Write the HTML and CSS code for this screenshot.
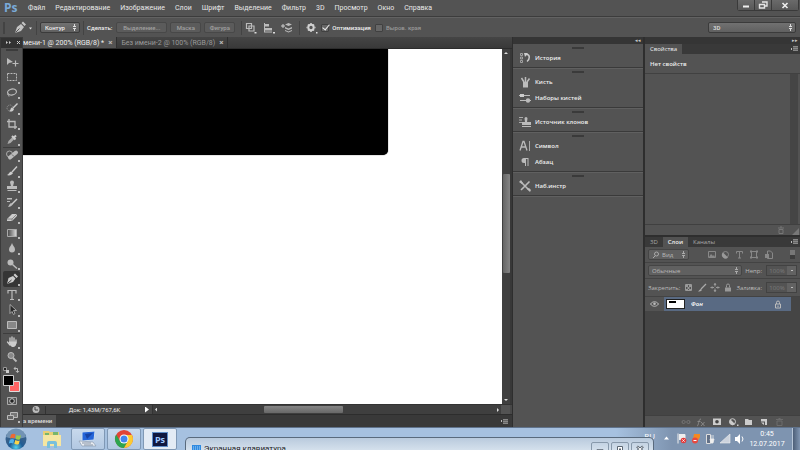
FILE: index.html
```html
<!DOCTYPE html>
<html lang="ru">
<head>
<meta charset="utf-8">
<title>Ps</title>
<link rel="stylesheet" href="styles.css">
</head>
<body>
<header class="menubar">
  <span class="logo">Ps</span>
  <nav class="menu">
    <a href="#">Файл</a><a href="#">Редактирование</a><a href="#">Изображение</a><a href="#">Слои</a><a href="#">Шрифт</a><a href="#">Выделение</a><a href="#">Фильтр</a><a href="#">3D</a><a href="#">Просмотр</a><a href="#">Окно</a><a href="#">Справка</a>
  </nav>
  <div class="winbtns">
    <button aria-label="Свернуть"><svg width="16" height="10"><path d="M5 6.500h6" stroke="#eee" stroke-width="2"/></svg></button>
    <button aria-label="Восстановить"><svg width="16" height="10"><path d="M7 2h5v4h-2M4.500 4.500h5v3.500h-5z" fill="none" stroke="#e4e4e4" stroke-width="1.400"/></svg></button>
    <button class="close" aria-label="Закрыть"><svg width="16" height="10"><path d="M5.500 3l5 5M10.500 3l-5 5" stroke="#eee" stroke-width="1.600"/></svg></button>
  </div>
</header>

<section class="options">
  <i class="grip-v"></i>
  <svg class="pen" width="18" height="14" viewBox="0 0 18 14"><path d="M1 12l2-6 4-3 3 3-3 4zM7.500 2l1.500-1.500 3 3L10.500 5z" fill="#c4c4c4"/><path d="M1.500 11.500l4-4" stroke="#555"/><path d="M15 6.500h3l-1.500 2z" fill="#ddd"/></svg>
  <i class="rule"></i>
  <select class="mode" aria-label="Режим"><option>Контур</option></select>
  <i class="rule"></i>
  <span class="make">Сделать:</span>
  <button class="wide">Выделение...</button>
  <button>Маска</button>
  <button>Фигура</button>
  <i class="rule"></i>
  <div class="opticons">
    <svg width="12" height="12" viewBox="0 0 12 12"><path d="M1.500 1.500h5v5h-5zM4 4h5v5H4z" fill="none" stroke="#bbb" stroke-width="1.200"/><path d="M9.500 10h2v1.500h-2z" fill="#ddd"/></svg>
    <svg width="12" height="12" viewBox="0 0 12 12"><path d="M1.500 1v9M1 10h8" stroke="#bbb"/><path d="M2 2h4v2.500H2zM2 6h7v2.500H2z" fill="#bbb"/><path d="M10 10h2v1.500h-2z" fill="#ddd"/></svg>
    <svg width="12" height="12" viewBox="0 0 12 12"><path d="M0 4h4M2 2v4" stroke="#ccc"/><path d="M4 2.500L7.500 1 11 2.500 7.500 4zM4 5l3.500 1.500L11 5v1.500L7.500 8 4 6.500zM4 8l3.500 1.500L11 8v1L7.500 10.500 4 9z" fill="#bbb"/></svg>
  </div>
  <i class="rule"></i>
  <svg class="gear" width="12" height="12" viewBox="0 0 12 12"><circle cx="5" cy="5.500" r="2.700" fill="none" stroke="#d0d0d0" stroke-width="2"/><path d="M5 1v1M5 9v1M.5 5.500h1M8.500 5.500h1M2 2.500l1 1M8 2.500l-1 1M2 8.500l1-1M8 8.500l-1-1" stroke="#d0d0d0" stroke-width="1.500"/><path d="M10 10h1.500v1.500H10z" fill="#ddd"/></svg>
  <label class="check"><input type="checkbox" checked>Оптимизация</label>
  <label class="check off"><input type="checkbox" disabled>Выров. края</label>
  <select class="space" aria-label="Рабочая среда"><option>3D</option></select>
</section>

<main class="work">
  <aside class="tools">
    <div class="toolhead"><svg width="22" height="9"><path d="M5 3l2 1.500L5 6zM8 3l2 1.500L8 6z" fill="#ccc"/><path d="M16 3l3 3M19 3l-3 3" stroke="#ccc"/></svg></div>
    <i class="grip"></i>
    <div class="set set6">
      <button class="plain" aria-label="Перемещение"><svg viewBox="0 0 16 14"><path d="M3 3v7l2-2 4-1z" fill="#bbb"/><path d="M8.500 8.500h6M11.500 5.500v6" stroke="#bbb" stroke-width="1.200"/></svg></button>
      <button aria-label="Область"><svg viewBox="0 0 16 14"><path d="M3.500 3.500h9v7h-9z" fill="none" stroke="#bbb" stroke-dasharray="2 1"/></svg></button>
      <button aria-label="Лассо"><svg viewBox="0 0 16 14"><ellipse cx="8" cy="6" rx="4.500" ry="3" transform="rotate(-12 8 6)" fill="none" stroke="#bbb" stroke-width="1.200"/><path d="M4 7.500c-1 2 1 1 1 3" fill="none" stroke="#bbb"/></svg></button>
      <button aria-label="Быстрое выделение"><svg viewBox="0 0 16 14"><circle cx="6" cy="7" r="3" fill="none" stroke="#999" stroke-dasharray="1 1"/><path d="M13.500 2.500L9 7" stroke="#ccc" stroke-width="1.500"/><path d="M5 10c2 0 1-3 3-3.500L10 8c-1 3-3 3-5 2z" fill="#ccc"/></svg></button>
      <button aria-label="Рамка"><svg viewBox="0 0 16 14"><path d="M5 2v8h8M3 4.500h8V12" fill="none" stroke="#bbb" stroke-width="1.300"/></svg></button>
      <button aria-label="Пипетка"><svg viewBox="0 0 16 14"><path d="M3.500 12l1-3 4-4 2 2-4 4z" fill="#aaa"/><path d="M8 4l3.500 3.500M10 5.500L12 3.500" stroke="#ccc" stroke-width="2"/></svg></button>
    </div>
    <div class="set set12">
      <button aria-label="Восстанавливающая кисть"><svg viewBox="0 0 16 14"><circle cx="5.500" cy="6" r="3" fill="none" stroke="#aaa"/><path d="M6 9.500L12 4.500" stroke="#bbb" stroke-width="4" stroke-linecap="round"/><path d="M8 6.500l2 2" stroke="#666"/></svg></button>
      <button aria-label="Кисть"><svg viewBox="0 0 16 14"><path d="M13 2.500L8 8" stroke="#ccc" stroke-width="1.400"/><path d="M3 11c2-.5 2-3 4-3.500L9 9c-1 2-4 3-6 2z" fill="#ccc"/></svg></button>
      <button aria-label="Штамп"><svg viewBox="0 0 16 14"><path d="M6 3.500a2 2 0 014 0L9 7h4v3H3V7h4zM3.500 11h9v1h-9z" fill="#bbb"/></svg></button>
      <button aria-label="Архивная кисть"><svg viewBox="0 0 16 14"><path d="M13 4L8 9" stroke="#ccc" stroke-width="1.400"/><path d="M4 12c1-1 1-3 3-4l2 1c-1 2-3 3-5 3zM3 3h5v1.500H3zM3 6h3v1H3z" fill="#bbb"/></svg></button>
      <button aria-label="Ластик"><svg viewBox="0 0 16 14"><path d="M3 9l5-5h5v2l-5 5H3z" fill="#ccc"/><path d="M3 9h5l5-5M8 9v2" fill="none" stroke="#777" stroke-width=".8"/></svg></button>
      <button aria-label="Градиент"><svg viewBox="0 0 16 14"><defs><linearGradient id="gr"><stop stop-color="#444"/><stop offset="1" stop-color="#ddd"/></linearGradient></defs><path d="M3.500 3.500h9v7h-9z" fill="url(#gr)" stroke="#aaa"/></svg></button>
      <button aria-label="Размытие"><svg viewBox="0 0 16 14"><path d="M8 2c1 3 3 4 3 6.500a3 3 0 01-6 0C5 6 7 5 8 2z" fill="#bbb"/></svg></button>
      <button aria-label="Осветлитель"><svg viewBox="0 0 16 14"><circle cx="6.500" cy="5.500" r="3" fill="#bbb"/><path d="M8.500 7.500L13 11.500" stroke="#bbb" stroke-width="1.500"/></svg></button>
      <button class="on" aria-label="Перо"><svg viewBox="0 0 16 14"><path d="M3 12l1.500-6L9 4l2.500 2.500L9 10zM9.500 3L11 1.500 14 4.500 12.500 6z" fill="#ccc"/><path d="M3.500 11.500L7.500 8" stroke="#333"/></svg></button>
      <button aria-label="Текст"><svg viewBox="0 0 16 14"><path d="M4 5.500v-3h8v3M8 3v8.500M6 11.500h4" fill="none" stroke="#bbb" stroke-width="1.200"/></svg></button>
      <button aria-label="Выделение контура"><svg viewBox="0 0 16 14"><path d="M6 1.500v9l2-2 1.500 3 1.500-1-1.500-3h3z" fill="#292929" stroke="#bbb" stroke-width=".8"/></svg></button>
      <button aria-label="Прямоугольник"><svg viewBox="0 0 16 14"><path d="M3.500 3.500h9v7h-9z" fill="#888" stroke="#bbb"/></svg></button>
    </div>
    <div class="set set2">
      <button aria-label="Рука"><svg viewBox="0 0 16 14"><path d="M6 7V3M8 7V2M10 7V3M12 8V5M3.500 7L6 10" stroke="#ccc" stroke-width="1.300" stroke-linecap="round"/><path d="M5 6.500h7.500c0 3-1 5.500-3 5.500-3 0-3-2-4.500-4z" fill="#ccc"/></svg></button>
      <button class="plain" aria-label="Масштаб"><svg viewBox="0 0 16 14"><circle cx="7" cy="5.500" r="3" fill="#888" stroke="#bbb"/><path d="M9 8l3.500 3.500" stroke="#bbb" stroke-width="1.800"/></svg></button>
    </div>
    <svg class="swatch" width="21" height="28"><path d="M2.500 2.500h3v3h-3z" fill="#222" stroke="#999"/><path d="M5 5h3v3H5z" fill="#ccc"/><path d="M14 3.500h2.500v3" fill="none" stroke="#bbb"/><path d="M14.500 1.500v4l-2-2zM14.500 6h4l-2 2z" fill="#bbb"/><path d="M8.500 16.500h10v10h-10z" fill="#ff6464" stroke="#ddd"/><path d="M2.500 10.500h10v10h-10z" fill="#000" stroke="#ccc"/></svg>
    <div class="set set2b">
      <button class="plain" aria-label="Быстрая маска"><svg viewBox="0 0 16 14"><path d="M3.500 3.500h9v7h-9z" fill="none" stroke="#aaa"/><circle cx="8" cy="7" r="2.300" fill="#222" stroke="#ccc"/></svg></button>
      <button aria-label="Режим экрана"><svg viewBox="0 0 16 14"><path d="M6.500 3.500h7v5h-7z" fill="#777" stroke="#bbb"/><path d="M3.500 6.500h6v4h-6z" fill="#666" stroke="#bbb"/></svg></button>
    </div>
  </aside>

  <section class="doc">
    <div class="tabs">
      <div class="tab cur"><span>мени-1 @ 200% (RGB/8) *</span><b>×</b></div>
      <div class="tab"><span>Без имени-2 @ 100% (RGB/8)</span><b>×</b></div>
    </div>
    <div class="view">
      <div class="canvas"><div class="shape"></div></div>
      <div class="vbar"><i class="up"></i><i class="vthumb"></i><i class="down"></i></div>
    </div>
    <div class="status">
      <svg width="22" height="9"><circle cx="13" cy="4.500" r="3.500" fill="#bbb"/><path d="M12 2v3h3" fill="none" stroke="#444"/></svg>
      <span class="size">Док: 1,43M/767,6K</span>
      <i class="play"></i>
      <div class="hbar"><i class="left"></i><i class="hthumb"></i><i class="right"></i></div>
      <i class="corner"></i>
    </div>
    <div class="timeline"><span>а времени</span><i class="pmenu"></i></div>
  </section>

  <aside class="dock">
    <div class="colhead">◂◂</div>
    <div class="group">
      <button><svg viewBox="0 0 12 12"><path d="M1.500 1.500h2v2h-2zM1.500 5h2v2h-2zM1.500 8.500h2v2h-2z" fill="none" stroke="#aaa" stroke-width=".9"/><path d="M6 2.500h2c3 0 3 5 0 7" fill="none" stroke="#ccc" stroke-width="1.500"/><path d="M5 1h4L6 5z" fill="#ccc"/></svg>История</button>
    </div>
    <div class="group">
      <button><svg viewBox="0 0 12 12"><path d="M4 6h5v5.500H4z" fill="#bbb"/><path d="M5 6L2.500 2M6.500 6V1M8 6l2.500-3.500" stroke="#bbb" stroke-width="1.500"/></svg>Кисть</button>
      <button><svg viewBox="0 0 12 12"><path d="M0 3.500h11M1 8.500h11" stroke="#bbb" stroke-width="1.200"/><path d="M1 2h4v3H1z" fill="#ccc"/><circle cx="9" cy="8.500" r="2.200" fill="#bbb"/></svg>Наборы кистей</button>
    </div>
    <div class="group">
      <button><svg viewBox="0 0 12 12"><path d="M0 1.500h4M0 4h3M0 6.500h3" stroke="#aaa"/><path d="M5.500 2.500a1.500 1.500 0 013 0L8 6h4v3H3V6h3zM3 10h9v1H3z" fill="#bbb"/></svg>Источник клонов</button>
    </div>
    <div class="group">
      <button><svg viewBox="0 0 12 12"><path d="M1 10.500L4 1.500h1L8 10.500M2.500 7h4" fill="none" stroke="#bbb" stroke-width="1.300"/><path d="M10.500 1v10" stroke="#aaa"/></svg>Символ</button>
      <button><svg viewBox="0 0 12 12"><path d="M9.500 2H5a2.500 2.500 0 000 5h1v3h1V3h1.500v7h1z" fill="#bbb"/></svg>Абзац</button>
    </div>
    <div class="group">
      <button><svg viewBox="0 0 12 12"><path d="M2 2l8 8M10.500 1.500L2 10" stroke="#bbb" stroke-width="1.600"/><path d="M0 2l2-2 2 3-1 1zM8 9l2-1 2 2-1 2z" fill="#bbb"/></svg>Наб.инстр</button>
    </div>
  </aside>

  <aside class="panels">
    <div class="colhead">▸▸</div>
    <div class="ptabs"><span class="ptab cur">Свойства</span><i class="pmenu"></i></div>
    <div class="noprops">Нет свойств</div>
    <div class="propbody"><i></i></div>
    <div class="pfoot"><svg width="30" height="9"><path d="M8 2h6M10 1h2M9 3.500h4v4H9z" fill="none" stroke="#777"/><path d="M29 2v7h-7z" fill="#777"/></svg></div>
    <div class="ptabs second"><span class="ptab">3D</span><span class="ptab cur">Слои</span><span class="ptab">Каналы</span><i class="pmenu"></i></div>
    <div class="row filter">
      <div class="kindbox"><svg width="8" height="8"><circle cx="4.500" cy="3" r="2" fill="none" stroke="#aaa"/><path d="M3 5L1 7" stroke="#aaa"/></svg><select class="kind" aria-label="Вид"><option>Вид</option></select></div>
      <svg class="filters" width="68" height="10"><path d="M1.500 1.500h7v6h-7z" fill="none" stroke="#888"/><path d="M2 7l2-3 2 2 1-1 1 2z" fill="#888"/><circle cx="18.500" cy="4.500" r="3" fill="none" stroke="#888"/><path d="M16 2.500l5 5a3 3 0 01-5-5z" fill="#999"/><path d="M29.500 3.500v-2h6v2M32.500 2v6M31 8h3" fill="none" stroke="#888"/><path d="M44.500 1.500h5v6h-5z" fill="none" stroke="#888"/><path d="M43 .5h2v2h-2zM49 .5h2v2h-2zM43 6.500h2v2h-2zM49 6.500h2v2h-2z" fill="#888"/><path d="M60.500 1h3l2 2v5.500h-5z" fill="none" stroke="#888"/><path d="M58 4h4v4h-4z" fill="#888"/></svg>
      <i class="toggle"></i>
    </div>
    <div class="row blend">
      <select class="mode2" aria-label="Наложение"><option>Обычные</option></select>
      <label for="op">Непр:</label><span class="num"><input id="op" value="100%" disabled><i></i></span>
    </div>
    <div class="row lock">
      <span>Закрепить:</span>
      <svg width="50" height="10"><path d="M2.500 1.500h6v6h-6z" fill="none" stroke="#999"/><path d="M3 2h2v2H3zM6 2h2v2H6zM4.500 4h2v2h-2zM3 6h2v1H3zM6 6h2v1H6z" fill="#999"/><path d="M23 1l-5 5" stroke="#aaa" stroke-width="1.300"/><path d="M15 8.500c1-1 2-2.500 3-2.500l1 1c-1 1.500-2 1.500-4 1.500z" fill="#aaa"/><path d="M32 0v9M27.500 4.500h9" stroke="#999" stroke-dasharray="3.500 2"/><path d="M30.500 2L32 0l1.500 2zM30.500 7L32 9l1.500-2zM29.500 3l-2 1.500 2 1.500zM34.500 3l2 1.500-2 1.500z" fill="#999"/><path d="M42 4.500h6v4h-6z" fill="#999"/><path d="M43.500 4.500v-2a1.500 1.500 0 013 0v2" fill="none" stroke="#999"/></svg>
      <label for="fl">Заливка:</label><span class="num"><input id="fl" value="100%" disabled><i></i></span>
    </div>
    <div class="layers">
      <div class="layer">
        <svg class="eye" width="9" height="8"><path d="M.5 4C2.500 1 6.500 1 8.500 4 6.500 7 2.500 7 .5 4z" fill="none" stroke="#bbb"/><circle cx="4.500" cy="3.800" r="1.300" fill="#bbb"/></svg>
        <div class="lrow"><div class="thumb"><i></i></div><em>Фон</em><svg width="8" height="9"><path d="M1.500 4h5v4h-5zM2.500 4V2.500a1.500 1.500 0 013 0V4M4 5.500V7" fill="none" stroke="#bbb"/></svg></div>
      </div>
    </div>
    <div class="pfoot last"><svg width="108" height="10"><path d="M4.500 3.500h-1a1.500 1.500 0 000 3h1M7.500 3.500h1a1.500 1.500 0 010 3h-1M4 5h4" fill="none" stroke="#777"/><path d="M17 9c2 0 1-7 4-7M17.500 4.500h3M21 5l3.500 4M24.500 5L21 9" fill="none" stroke="#888"/><path d="M33 1.500h8v6.500h-8z" fill="#ccc"/><circle cx="37" cy="4.700" r="1.800" fill="#444"/><circle cx="52.500" cy="4.700" r="3" fill="none" stroke="#ccc"/><path d="M50.500 2.500l4.500 4.500a3 3 0 01-4.500-4.500zM57 7.500h1.500V9H57z" fill="#ccc"/><path d="M65 2h3l1 1h3v5h-7z" fill="#ccc"/><path d="M81 2h6v6h-2V4.500h-4zM81 5.500h3V8z" fill="#ccc"/><path d="M96 2.500h7M98.500 1.500h2M97 4h5v4.500h-5z" fill="none" stroke="#6c6c6c"/></svg></div>
  </aside>
</main>

<footer class="taskbar">
  <button class="start" aria-label="Пуск"><svg width="22" height="22" viewBox="0 0 22 22"><defs><radialGradient id="orb" cy=".9"><stop stop-color="#51d0ee"/><stop offset=".6" stop-color="#205d96"/><stop offset="1" stop-color="#35608c"/></radialGradient></defs><circle cx="11" cy="11" r="10.500" fill="url(#orb)"/><path d="M1 9a10 10 0 0120 0c-6 2-14 2-20 0z" fill="#bcd3e5" opacity=".45"/><path d="M6 6.500c2-1 3-1 4.500 0L9.500 10.500c-1.500-1-3-.8-4.500 0z" fill="#ee6a32"/><path d="M11.500 7c1.500 1 3 1 4.500.3L15 11.200c-1.500.8-3 .6-4.500-.3z" fill="#9acb48"/><path d="M4.800 11.700c1.700-.8 3-.8 4.500 0L8.300 15.500c-1.500-.8-3-.8-4.500 0z" fill="#4fb0ea"/><path d="M10.300 12c1.500 1 3 1 4.500.4L13.800 16c-1.500.8-3 .6-4.500-.3z" fill="#fcd448"/></svg></button>
  <button class="app flat" aria-label="Проводник"><svg width="22" height="20" viewBox="0 0 22 20"><path d="M2 2h6l1 1h9v13H2z" fill="#e9cf74"/><path d="M4 4h4v5H4zM12 3h5v5h-5z" fill="#79b66b"/><path d="M2 6h18v11H2z" fill="#f6e6a2"/><path d="M6 19v-5q0-2 2-2h6q2 0 2 2v5h-3v-4H9v4z" fill="#79c0dc"/></svg></button>
  <button class="app" aria-label="Экран"><svg width="22" height="20" viewBox="0 0 22 20"><path d="M5 3l13-1-1 9-12 1z" fill="#2464d8" stroke="#cde"/><path d="M8 5l8-1-6 6z" fill="#1542a4"/><path d="M2 12l14 1 3 4H5z" fill="#e9edf2" stroke="#8493a7" stroke-width=".6"/><path d="M5 14h9M7 16h9" stroke="#8493a7"/></svg></button>
  <button class="app" aria-label="Chrome"><svg width="20" height="20" viewBox="0 0 20 20"><circle cx="10" cy="10" r="9" fill="#e24435"/><path d="M2.200 5.500A9 9 0 0010 19l4-7H6z" fill="#2da450"/><path d="M10 19a9 9 0 008-13h-8l4 6z" fill="#fbcb32"/><circle cx="10" cy="10" r="4.500" fill="#fff"/><circle cx="10" cy="10" r="3.500" fill="#4385ed"/></svg></button>
  <button class="app active" aria-label="Photoshop"><span>Ps</span></button>
  <div class="tray">
    <span class="lang">RU</span>
    <svg width="84" height="16" viewBox="0 0 84 16"><path d="M3 8.500l2.500-3 2.500 3z" fill="#fff"/><path d="M17 2.500v10M18 3.500h6v5h-6" fill="#eee" stroke="#eee"/><circle cx="22.500" cy="9.500" r="2.800" fill="#e33b3b"/><path d="M21.300 8.300l2.400 2.400M23.700 8.300l-2.400 2.400" stroke="#fff" stroke-width=".8"/><path d="M33 3h6v3l-3 5-4-3z" fill="#f48922"/><circle cx="34" cy="9.500" r="3" fill="#e94940"/><path d="M32.500 9.500h3" stroke="#fff"/><path d="M45.500 3.500h4v9h-4z" fill="#637187" stroke="#ddd"/><path d="M50 4v5M52 4v5M49 8h4l-1 4h-2z" fill="#eee" stroke="#eee" stroke-width=".8"/><path d="M59 12h10V3z" fill="#ccd3dd" stroke="#eee" stroke-width=".6"/><path d="M74 6h2l3-3v10l-3-3h-2z" fill="#fff"/><path d="M81 5.500q2 2.500 0 5" fill="none" stroke="#fff"/></svg>
    <time><span>0:45</span><span>12.07.2017</span></time>
    <i class="desk"></i>
  </div>
</footer>
<div class="osk">
  <svg width="9" height="7"><path d="M0 0h9v7H0z" fill="#2f8ae0"/><path d="M1 2h7M1 4h7" stroke="#a9d4fa" stroke-dasharray="1 1"/></svg>
  <span>Экранная клавиатура</span>
  <div class="oskbtns">
    <button aria-label="Свернуть"><svg width="16" height="9"><path d="M5 5.500h6v2H5z" fill="#fff" stroke="#5b6673" stroke-width=".8"/></svg></button>
    <button aria-label="Развернуть"><svg width="16" height="9"><path d="M5.500 2.500h5v5h-5z" fill="#fff" stroke="#5b6673"/><path d="M7 4.500h2v1.500H7z" fill="#5b6673"/></svg></button>
    <button aria-label="Закрыть"><svg width="16" height="9"><path d="M5 2.500l6 5M11 2.500l-6 5" stroke="#5b6673" stroke-width="2.600"/><path d="M5.500 3l5 4M10.500 3l-5 4" stroke="#fff"/></svg></button>
  </div>
</div>
</body>
</html>
```
FILE: styles.css
```css
* { box-sizing: border-box; }
html, body { height: 100%; }
body {
  margin: 0;
  display: flex;
  flex-direction: column;
  overflow: hidden;
  position: relative;
  background: #535353;
  color: #ddd;
  font: 6px/8px "Open Sans", "Noto Sans", sans-serif;
}
button, input, select {
  font: inherit;
  color: inherit;
  margin: 0;
  padding: 0;
  border: 0;
  background: none;
  appearance: none;
}
i { display: block; flex: none; }
svg { display: block; flex: none; }
a { color: inherit; text-decoration: none; }

.menubar { display: flex; align-items: center; height: 17px; flex: none; border-bottom: 1px solid #3c3c3c; }
.logo { width: 28px; padding-left: 4px; font: bold 12px/16px "Open Sans", sans-serif; color: #7aaad8; }
.menu { display: flex; gap: 10px; font: 7px/17px Roboto, sans-serif; color: #e8e8e8; }
.winbtns { display: flex; align-self: flex-start; margin-left: auto; margin-right: 1px; border: 1px solid #3a3a3a; border-top: 0; border-radius: 0 0 3px 3px; }
.winbtns button { background: linear-gradient(#6a6a6a, #585858); border-right: 1px solid #3a3a3a; }
.winbtns .close { padding: 0 5px; border-right: 0; }

.options { display: flex; align-items: center; height: 20px; flex: none; border-top: 1px solid #626262; font-family: Roboto, sans-serif; font-weight: 500; }
.grip-v { width: 2px; height: 12px; margin: 0 8px 0 3px; background: #434343; }
.rule { width: 1px; height: 14px; margin: 0 3px; background: #434343; }
.options .pen { width: 20px; }
.options select, .options button { height: 11px; border: 1px solid #3b3b3b; border-radius: 2px; background: linear-gradient(#717171, #606060); }
.options button { width: 31px; margin-right: 3px; background: #5b5b5b; border-color: #484848; color: #a0a0a0; }
.options button.wide { width: 51px; }
.options .mode { width: 40px; padding-left: 4px; color: #eee; }
.options .mode, .options .space {
  background:
    conic-gradient(from 150deg at 50% 0, #ddd 60deg, transparent 0) right 3px top 1px / 3px 3px no-repeat,
    conic-gradient(from -30deg at 50% 100%, #ddd 60deg, transparent 0) right 3px bottom 1px / 3px 3px no-repeat,
    linear-gradient(#717171, #606060);
}
.make { margin-right: 4px; color: #eee; }
.opticons { display: flex; gap: 6px; padding: 0 3px 0 0; }
.gear { margin: 0 3px; }
.check { display: flex; align-items: center; gap: 3px; margin-right: 4px; color: #eee; }
.check.off { color: #999; }
.check input { width: 8px; height: 8px; border: 1px solid #404040; background: #666; border-radius: 1px; }
.check input:checked::before { content: ""; display: block; width: 3px; height: 6px; margin: -2px 0 0 2px; border: solid #eee; border-width: 0 1px 1px 0; transform: rotate(40deg); }
.options .space { width: 88px; margin: 0 4px 0 auto; padding-left: 4px; }

.work { display: flex; flex: 1; min-height: 0; background: #383838; }
.tools { width: 23px; flex: none; display: flex; flex-direction: column; padding-bottom: 3px; background: #535353; border: 1px solid #3a3a3a; border-bottom: 0; }
.toolhead { height: 10px; background: #323232; }
.grip { width: 12px; height: 2px; margin: 1px auto 3px; background: #3b3b3b; }
.set { display: flex; flex-direction: column; border-bottom: 1px solid #3d3d3d; min-height: 0; margin: 0 2px; }
.set6 { flex: 6; }
.set12 { flex: 12; }
.set2 { flex: 2; border: 0; }
.set2b { flex: 2; border: 0; }
.set button { position: relative; flex: 1; min-height: 0; display: flex; align-items: center; justify-content: center; }
.set button svg { width: 16px; height: 14px; }
.set button::after { content: ""; position: absolute; right: 0; bottom: 1px; width: 2px; height: 2px; background: #bbb; }
.set button.plain::after { display: none; }
.set button.on { background: #353535; border-radius: 2px; }

.doc { flex: 1; min-width: 0; display: flex; flex-direction: column; }
.tabs { display: flex; height: 12px; flex: none; background: linear-gradient(#454545, #393939); border-bottom: 1px solid #2c2c2c; font: 7px/10px Roboto, sans-serif; }
.tab { display: flex; align-items: center; gap: 4px; padding: 0 4px; color: #999; border-right: 1px solid #303030; }
.tab b { font-size: 8px; color: #bbb; }
.tab.cur { background: #535353; color: #eee; padding-left: 0; }
.view { flex: 1; min-height: 0; display: flex; }
.canvas { flex: 1; background: #fff; overflow: hidden; }
.shape { width: 76.2%; height: 29.800%; background: #000; border-radius: 0 0 5px 0; box-shadow: 0 0 1px #000; }
.vbar { width: 8px; display: flex; flex-direction: column; align-items: center; background: #404040; margin-right: 2px; }
.up, .down { width: 4px; height: 2px; margin: 3px 0; background: #ddd; clip-path: polygon(50% 0, 100% 100%, 0 100%); }
.down { transform: rotate(180deg); margin-top: auto; }
.vthumb { width: 7px; height: 28%; margin-top: 117px; background: linear-gradient(90deg, #666, #858585); border-radius: 1px; }
.status { display: flex; align-items: center; height: 10px; flex: none; background: #484848; border-top: 1px solid #333; font-family: Roboto, sans-serif; }
.size { width: 98px; text-align: center; color: #eee; border-left: 1px solid #333; }
.play { width: 4px; height: 6px; margin: 0 3px 0 2px; background: #fff; clip-path: polygon(0 0, 100% 50%, 0 100%); }
.hbar { flex: 1; height: 9px; display: flex; align-items: center; background: #3f3f3f; border-left: 1px solid #333; }
.left, .right { width: 2px; height: 4px; margin: 0 2px; background: #ddd; clip-path: polygon(100% 0, 100% 100%, 0 50%); }
.right { transform: rotate(180deg); margin-left: auto; }
.hthumb { width: 79px; height: 7px; margin-left: 105px; background: linear-gradient(#858585, #686868); border-radius: 1px; }
.corner { width: 9px; height: 9px; margin-right: 2px; background: #535353; }
.timeline { display: flex; align-items: center; justify-content: space-between; height: 13px; flex: none; background: #393939; border-top: 1px solid #2d2d2d; padding-right: 4px; font-family: Roboto, sans-serif; }
.timeline span { background: #535353; line-height: 12px; padding-right: 4px; font-weight: 500; }
.pmenu { width: 8px; height: 5px; background: conic-gradient(from -30deg at 50% 100%, #bbb 60deg, transparent 0) left center / 3px 2px no-repeat, repeating-linear-gradient(#888 0 1px, #666 1px 2px) right center / 5px 5px no-repeat; }

.dock { width: 133px; flex: none; background: #535353; border-left: 1px solid #2e2e2e; border-right: 2px solid #2e2e2e; }
.colhead { height: 7px; flex: none; padding-right: 2px; background: #353535; font-size: 5px; line-height: 7px; text-align: right; color: #ccc; }
.group { padding: 6px 6px 1px; border-bottom: 1px solid #3a3a3a; box-shadow: 0 1px #606060; background: linear-gradient(#3a3a3a, #3a3a3a) center 3px / 12px 2px no-repeat; }
.group button { display: flex; align-items: center; gap: 4px; height: 16px; color: #eee; font-weight: 600; }
.group svg { width: 12px; height: 12px; }

.panels { width: 155px; flex: none; display: flex; flex-direction: column; background: #535353; }
.ptabs { display: flex; align-items: stretch; height: 10px; flex: none; background: #393939; }
.ptabs .pmenu { margin: 2px 2px 0 auto; }
.ptab { padding: 0 5px; line-height: 10px; color: #aaa; }
.ptab.cur { background: #535353; color: #eee; }
.second .cur { font-weight: 600; }
.noprops { height: 20px; flex: none; padding-left: 5px; line-height: 20px; color: #eee; font-weight: 600; border-bottom: 1px solid #414141; }
.propbody { flex: 1; display: flex; justify-content: flex-end; }
.propbody i { width: 8px; background: #454545; margin-right: 2px; }
.pfoot { display: flex; justify-content: flex-end; align-items: center; height: 11px; flex: none; border-top: 1px solid #404040; }
.second { border-top: 2px solid #2e2e2e; height: 12px; }
.row { display: flex; align-items: center; height: 16px; flex: none; padding: 0 3px; border-bottom: 1px solid #434343; color: #bbb; }
.lock { height: 18px; }
.kindbox { display: flex; align-items: center; width: 41px; height: 11px; padding-left: 3px; border: 1px solid #454545; border-radius: 2px; }
.kindbox, .mode2 {
  background:
    conic-gradient(from 150deg at 50% 0, #aaa 60deg, transparent 0) right 3px top 1px / 3px 3px no-repeat,
    conic-gradient(from -30deg at 50% 100%, #aaa 60deg, transparent 0) right 3px bottom 1px / 3px 3px no-repeat,
    #606060;
}
.kind { flex: 1; min-width: 0; padding-left: 2px; }
.filters { margin-left: 18px; }
.toggle { width: 5px; height: 9px; margin-left: auto; margin-right: 2px; background: linear-gradient(#777 50%, #3d3d3d 50%); }
.mode2 { width: 94px; height: 11px; padding-left: 3px; border: 1px solid #454545; border-radius: 2px; }
.row label { margin: 0 4px 0 auto; }
.num { display: flex; height: 11px; border: 1px solid #424242; color: #7b7b7b; }
.num input { width: 20px; min-width: 0; text-align: center; }
.num i { width: 9px; background: conic-gradient(from -30deg at 50% 100%, #bbb 60deg, transparent 0) center / 4px 2px no-repeat, #626262; }
.lock svg { margin-left: 3px; }
.layers { flex: none; height: 118px; background: #454545; padding-right: 9px; }
.layer { display: flex; align-items: center; height: 14px; background: #535353; }
.eye { margin: 0 5px; }
.lrow { flex: 1; height: 14px; display: flex; align-items: center; padding: 0 9px 0 2px; background: #596a83; }
.thumb { width: 19px; height: 10px; background: #fff; border: 1px solid #222; padding: 1px 2px; }
.thumb i { width: 7px; height: 2px; background: #000; }
.lrow em { flex: 1; margin-left: 6px; color: #fff; font-weight: 600; }
.last { padding-right: 12px; height: 12px; }

.taskbar { display: flex; align-items: center; gap: 2px; height: 23px; flex: none; padding-left: 5px; background: linear-gradient(90deg, #a6c1e0 77%, #7e94b0 84%); border-top: 1px solid #60738c; }
.start { width: 28px; }
.app { display: flex; align-items: center; justify-content: center; width: 34px; height: 22px; border: 1px solid #7f98b5; border-radius: 2px; background: linear-gradient(#c8d9ec, #b2c8e2); }
.app.flat { border-color: transparent; background: none; }
.app.active { background: #e3ebf5; }
.app span { width: 16px; height: 15px; border: 1px solid #5e8cc8; background: #10173f; color: #9fc8ff; font: bold 9px/13px "Open Sans", sans-serif; }
.tray { display: flex; align-items: center; margin-left: auto; height: 100%; color: #fff; }
.lang { font-size: 8px; margin-right: 6px; align-self: flex-start; line-height: 16px; }
time { display: flex; flex-direction: column; width: 40px; margin: 0 5px 0 2px; text-align: center; font: 7px/10px Roboto, sans-serif; }
.desk { width: 8px; height: 100%; background: linear-gradient(90deg, #4d5f78, #8196b2); border-left: 1px solid #b8c6d8; }

.osk { position: absolute; left: 185px; right: 146px; bottom: 0; height: 13px; display: flex; align-items: flex-start; gap: 3px; padding: 7px 4px 0 6px; overflow: hidden; background: linear-gradient(#b9cadd, #d4e0ec); border: 1px solid #596a7d; border-bottom: 0; border-radius: 5px 5px 0 0; color: #222; font: 8px/7px Roboto, sans-serif; }
.oskbtns { display: flex; gap: 2px; margin: -3px 0 0 auto; }
.oskbtns button { width: 18px; height: 12px; border: 1px solid #8899ab; border-radius: 2px; }
```
